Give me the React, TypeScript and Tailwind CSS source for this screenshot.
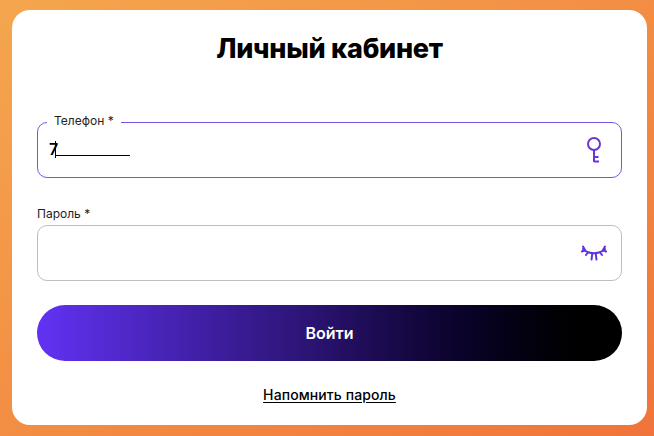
export default function App() {
  return (
    <div className="flex h-[436px] w-[654px] overflow-hidden bg-gradient-to-br from-[#f4a64e] to-[#f0743a] pb-[11px] pl-3 pr-[7px] pt-[10px] font-['Inter',sans-serif] text-black">
      <div className="flex flex-1 flex-col gap-[56px] rounded-[18px] bg-white px-[25px] pt-[22px]">
        <h1 className="text-center text-[27px] font-extrabold leading-[34px] tracking-[-0.25px]">Личный кабинет</h1>

        <form className="flex flex-col gap-6">
          {/* Phone */}
          <div className="relative flex h-[56px] items-center justify-between rounded-[10px] border-[1.5px] border-[#7a56e0] pl-[11px] pr-[19px]">
            <span className="absolute -top-[10px] left-[9px] bg-white px-[7px] text-[12px] leading-[16px] text-[#222]">Телефон *</span>
            <div className="flex h-[22px] items-start">
              <span className="w-[6px] text-[16px] font-semibold leading-[20px]">7</span>
              <span className="mt-[2px] h-[17px] w-px bg-black" />
              <span className="mt-[15.5px] h-[1.5px] w-[74px] bg-black" />
            </div>
            <svg width="16" height="26" viewBox="0 0 16 26" fill="none" stroke="#6a35d8" strokeWidth="2">
              <circle cx="8" cy="7" r="6" />
              <path d="M8 13v12M8 20h4.5M8 24.5h5" />
            </svg>
          </div>

          {/* Password */}
          <div className="flex flex-col gap-[3px] pt-1">
            <label className="text-[12px] leading-[16px] text-[#222]">Пароль *</label>
            <div className="flex h-[56px] items-center justify-end rounded-[10px] border border-[#bdbdbd] pr-[14px]">
              <svg width="26" height="16" viewBox="0 0 26 16" fill="none" stroke="#5f34dc" strokeWidth="2" strokeLinecap="round">
                <path d="M2 4C7.5 9.5 18.5 9.5 24 4" />
                <path d="M1 6.5l3-1.5M5 10l2-2.5M10.5 14.5l.8-6M15.5 14.5l-.8-6M21 10l-2-2.5M25 6.5l-3-1.5M2 1.5l1.5 2.5M24 1.5l-1.5 2.5" />
              </svg>
            </div>
          </div>

          <div className="flex flex-col items-center gap-[25px]">
            <button type="button" className="h-[56px] w-full rounded-full bg-gradient-to-r from-[#6232f4] via-[#2d1578] via-45% to-black text-[16px] font-semibold text-white">
              Войти
            </button>
            <a className="text-[14px] font-medium leading-[18px] tracking-[0.1px] underline underline-offset-2">Напомнить пароль</a>
          </div>
        </form>
      </div>
    </div>
  );
}
